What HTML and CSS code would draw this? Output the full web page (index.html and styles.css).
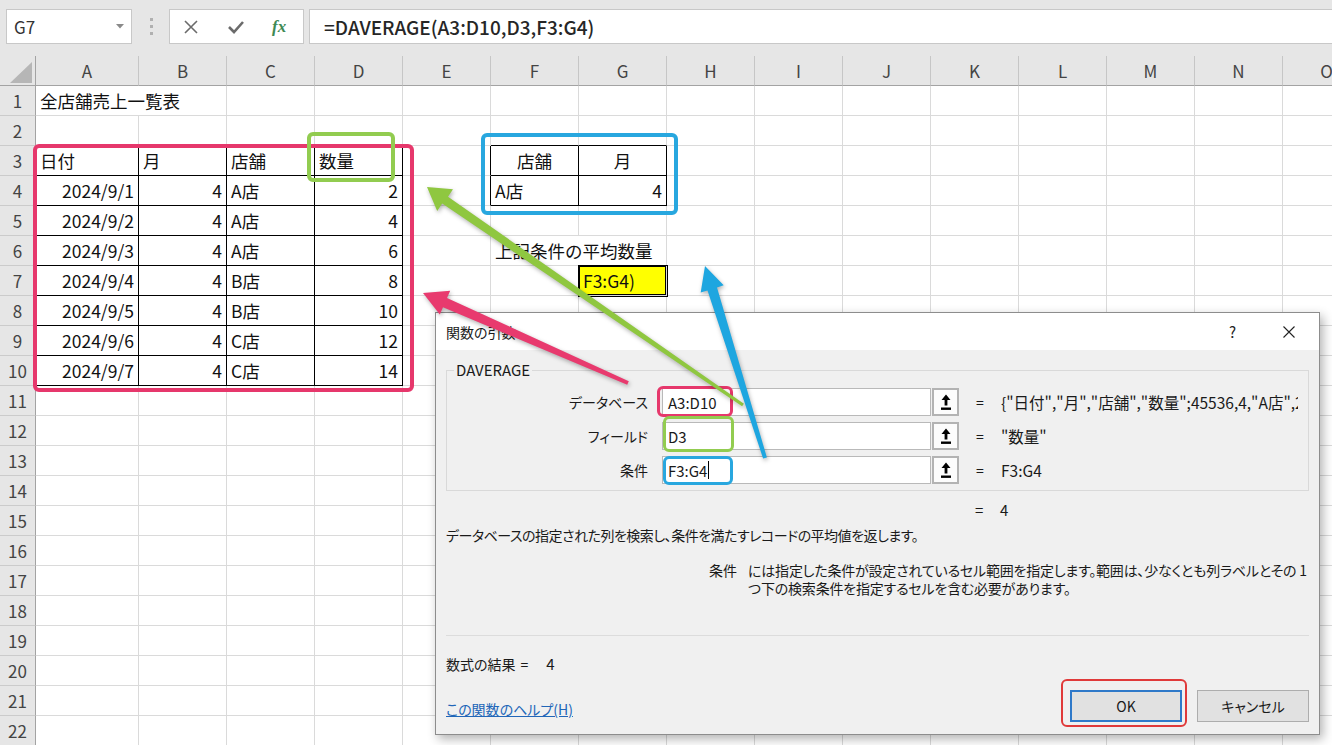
FILE: index.html
```html
<!DOCTYPE html>
<html lang="ja">
<head>
<meta charset="utf-8">
<title>DAVERAGE</title>
<link rel="stylesheet" href="styles.css">
</head>
<body>
<div class="toolbar">
  <div class="namebox"><span>G7</span><svg width="8" height="5" viewBox="0 0 8 5"><path d="M0 0h8L4 4.5z" fill="#8a8a8a"/></svg></div>
  <div class="grip"><i></i><i></i><i></i></div>
  <div class="fxbox">
    <svg class="ic-x" width="16" height="16" viewBox="0 0 16 16"><path d="M2 2l12 12M14 2L2 14" stroke="#6b6b6b" stroke-width="1.6" fill="none"/></svg>
    <svg class="ic-ok" width="18" height="16" viewBox="0 0 18 16"><path d="M2 8l5 5L16 3" stroke="#6b6b6b" stroke-width="2.6" fill="none"/></svg>
    <span class="fx">fx</span>
  </div>
  <div class="formula">=DAVERAGE(A3:D10,D3,F3:G4)</div>
</div>

<div class="sheet">
  <div class="corner"></div><div class="ch">A</div><div class="ch">B</div><div class="ch">C</div><div class="ch">D</div><div class="ch">E</div><div class="ch">F</div><div class="ch">G</div><div class="ch">H</div><div class="ch">I</div><div class="ch">J</div><div class="ch">K</div><div class="ch">L</div><div class="ch">M</div><div class="ch">N</div><div class="ch">O</div>

  <div class="rh">1</div><div class="span2">全店舗売上一覧表</div><i></i><i></i><i></i><i></i><i></i><i></i><i></i><i></i><i></i><i></i><i></i><i></i><i></i>

  <div class="rh">2</div><i class="tt"></i><i class="tt"></i><i class="tt"></i><i class="tt"></i><i></i><i class="tt"></i><i class="tt"></i><i></i><i></i><i></i><i></i><i></i><i></i><i></i><i></i>

  <div class="rh">3</div><div class="t tl">日付</div><div class="t">月</div><div class="t">店舗</div><div class="t">数量</div><i class="tr"></i><div class="t ctr">店舗</div><div class="t ctr">月</div><i></i><i></i><i></i><i></i><i></i><i></i><i></i><i></i>

  <div class="rh">4</div><div class="t tl r">2024/9/1</div><div class="t r">4</div><div class="t">A店</div><div class="t r">2</div><i class="tr"></i><div class="t">A店</div><div class="t r">4</div><i></i><i></i><i></i><i></i><i></i><i></i><i></i><i></i>

  <div class="rh">5</div><div class="t tl r">2024/9/2</div><div class="t r">4</div><div class="t">A店</div><div class="t r">4</div><i></i><i></i><i></i><i></i><i></i><i></i><i></i><i></i><i></i><i></i><i></i>

  <div class="rh">6</div><div class="t tl r">2024/9/3</div><div class="t r">4</div><div class="t">A店</div><div class="t r">6</div><i></i><div class="span2">上記条件の平均数量</div><i></i><i></i><i></i><i></i><i></i><i></i><i></i><i></i>

  <div class="rh">7</div><div class="t tl r">2024/9/4</div><div class="t r">4</div><div class="t">B店</div><div class="t r">8</div><i></i><i></i><div class="sel">F3:G4)</div><i></i><i></i><i></i><i></i><i></i><i></i><i></i><i></i>

  <div class="rh">8</div><div class="t tl r">2024/9/5</div><div class="t r">4</div><div class="t">B店</div><div class="t r">10</div><i></i><i></i><i></i><i></i><i></i><i></i><i></i><i></i><i></i><i></i><i></i>

  <div class="rh">9</div><div class="t tl r">2024/9/6</div><div class="t r">4</div><div class="t">C店</div><div class="t r">12</div><i></i><i></i><i></i><i></i><i></i><i></i><i></i><i></i><i></i><i></i><i></i>

  <div class="rh">10</div><div class="t tl r">2024/9/7</div><div class="t r">4</div><div class="t">C店</div><div class="t r">14</div><i></i><i></i><i></i><i></i><i></i><i></i><i></i><i></i><i></i><i></i><i></i>

  <div class="rh">11</div><i></i><i></i><i></i><i></i><i></i><i></i><i></i><i></i><i></i><i></i><i></i><i></i><i></i><i></i><i></i>
  <div class="rh">12</div><i></i><i></i><i></i><i></i><i></i><i></i><i></i><i></i><i></i><i></i><i></i><i></i><i></i><i></i><i></i>
  <div class="rh">13</div><i></i><i></i><i></i><i></i><i></i><i></i><i></i><i></i><i></i><i></i><i></i><i></i><i></i><i></i><i></i>
  <div class="rh">14</div><i></i><i></i><i></i><i></i><i></i><i></i><i></i><i></i><i></i><i></i><i></i><i></i><i></i><i></i><i></i>
  <div class="rh">15</div><i></i><i></i><i></i><i></i><i></i><i></i><i></i><i></i><i></i><i></i><i></i><i></i><i></i><i></i><i></i>
  <div class="rh">16</div><i></i><i></i><i></i><i></i><i></i><i></i><i></i><i></i><i></i><i></i><i></i><i></i><i></i><i></i><i></i>
  <div class="rh">17</div><i></i><i></i><i></i><i></i><i></i><i></i><i></i><i></i><i></i><i></i><i></i><i></i><i></i><i></i><i></i>
  <div class="rh">18</div><i></i><i></i><i></i><i></i><i></i><i></i><i></i><i></i><i></i><i></i><i></i><i></i><i></i><i></i><i></i>
  <div class="rh">19</div><i></i><i></i><i></i><i></i><i></i><i></i><i></i><i></i><i></i><i></i><i></i><i></i><i></i><i></i><i></i>
  <div class="rh">20</div><i></i><i></i><i></i><i></i><i></i><i></i><i></i><i></i><i></i><i></i><i></i><i></i><i></i><i></i><i></i>
  <div class="rh">21</div><i></i><i></i><i></i><i></i><i></i><i></i><i></i><i></i><i></i><i></i><i></i><i></i><i></i><i></i><i></i>
  <div class="rh">22</div><i></i><i></i><i></i><i></i><i></i><i></i><i></i><i></i><i></i><i></i><i></i><i></i><i></i><i></i><i></i>
</div>

<div class="mark m-table"></div>
<div class="mark m-field"></div>
<div class="mark m-crit"></div>

<div class="dialog">
  <div class="titlebar">
    <span class="title">関数の引数</span>
    <span class="qm">?</span>
    <svg class="close" width="12" height="12" viewBox="0 0 12 12"><path d="M0.5 0.5l11 11M11.5 0.5l-11 11" stroke="#222" stroke-width="1.1" fill="none"/></svg>
  </div>
  <div class="dbody">
    <fieldset class="group">
      <legend>DAVERAGE</legend>
      <div class="arg">
        <label>データベース</label>
        <div class="inp">A3:D10<span class="imark im-db"></span></div>
        <div class="pick"><svg width="12" height="17" viewBox="0 0 12 17"><path d="M6 0.5L1.5 6H4.6V11.5H7.4V6H10.5Z" fill="#000"/><rect x="1" y="13.5" width="10" height="2.4" fill="#000"/></svg></div>
        <span class="eq">=</span>
        <span class="val">{"日付","月","店舗","数量";45536,4,"A店",2;45537,4,"A店",4}</span>
      </div>
      <div class="arg">
        <label>フィールド</label>
        <div class="inp">D3<span class="imark im-fd"></span></div>
        <div class="pick"><svg width="12" height="17" viewBox="0 0 12 17"><path d="M6 0.5L1.5 6H4.6V11.5H7.4V6H10.5Z" fill="#000"/><rect x="1" y="13.5" width="10" height="2.4" fill="#000"/></svg></div>
        <span class="eq">=</span>
        <span class="val">"数量"</span>
      </div>
      <div class="arg">
        <label>条件</label>
        <div class="inp">F3:G4<span class="caret"></span><span class="imark im-cr"></span></div>
        <div class="pick"><svg width="12" height="17" viewBox="0 0 12 17"><path d="M6 0.5L1.5 6H4.6V11.5H7.4V6H10.5Z" fill="#000"/><rect x="1" y="13.5" width="10" height="2.4" fill="#000"/></svg></div>
        <span class="eq">=</span>
        <span class="val">F3:G4</span>
      </div>
    </fieldset>
    <div class="res1"><span class="eq">=</span><span class="num">4</span></div>
    <p class="desc">データベースの指定された列を検索し、条件を満たすレコードの平均値を返します。</p>
    <div class="argdesc">
      <span class="an">条件</span>
      <span class="at">には指定した条件が設定されているセル範囲を指定します。範囲は、少なくとも列ラベルとその 1<br>つ下の検索条件を指定するセルを含む必要があります。</span>
    </div>
    <hr class="sep">
    <div class="result">数式の結果<span class="req">=</span><span class="num2">4</span></div>
    <div class="foot">
      <a class="link" href="#">この関数のヘルプ(H)</a>
      <div class="btns">
        <div class="okwrap"><button class="btn ok">OK</button><span class="okmark"></span></div>
        <button class="btn cancel">キャンセル</button>
      </div>
    </div>
  </div>
</div>

<svg class="arrows" width="1332" height="745" viewBox="0 0 1332 745">
  <polygon class="arr" fill="#8fc740" points="427,187 453,189.3 448,196.8 743.9,403.7 742.1,406.3 442.2,203.6 437.2,210.9"/>
  <polygon class="arr" fill="#e83a6e" points="423,293 450.2,290.7 447,298 628.8,381.2 627.2,384.8 443,307.2 439.8,314.5"/>
  <polygon class="arr" fill="#1ea6e0" points="705,266 723.7,285.3 717,287.4 766.9,457.4 763.1,458.6 707.5,290.4 700.7,292.5"/>
</svg>
</body>
</html>
```

FILE: styles.css
```css
* { box-sizing: border-box; margin: 0; padding: 0; }
html, body { width: 1332px; height: 745px; overflow: hidden; }
body {
  position: relative;
  background: #fff;
  font-family: "Noto Sans CJK JP", "Noto Sans", sans-serif;
  color: #1e1e1e;
}

/* ---------- toolbar ---------- */
.toolbar {
  height: 56px;
  background: #e6e6e6;
  display: flex;
  align-items: flex-start;
  padding-top: 9px;
}
.namebox {
  margin-left: 6px;
  width: 126px;
  height: 35px;
  background: #fff;
  border: 1px solid #c8c8c8;
  display: flex;
  align-items: center;
  justify-content: space-between;
  padding: 0 7px;
  font-size: 17px;
  color: #333;
}
.grip {
  margin-left: 17px;
  width: 4px;
  height: 35px;
  display: flex;
  flex-direction: column;
  justify-content: center;
  align-items: center;
  gap: 4px;
}
.grip i { display: block; width: 3px; height: 3px; background: #b0b0b0; }
.fxbox {
  margin-left: 16px;
  width: 135px;
  height: 35px;
  background: #fff;
  border: 1px solid #c8c8c8;
  display: flex;
  align-items: center;
  padding-left: 13px;
}
.ic-ok { margin-left: 28px; }
.fx {
  margin-left: 27px;
  font-family: "Liberation Serif", serif;
  font-style: italic;
  font-weight: bold;
  font-size: 17px;
  color: #3f8a55;
}
.formula {
  margin-left: 5px;
  flex: 1;
  height: 35px;
  background: #fff;
  border: 1px solid #c8c8c8;
  border-right: 0;
  display: flex;
  align-items: center;
  padding-left: 14px;
  font-size: 19px;
  font-weight: 500;
  color: #262626;
}

/* ---------- sheet ---------- */
.sheet {
  display: grid;
  grid-template-columns: 36px 103px repeat(14, 88px);
  grid-auto-rows: 30px;
  font-size: 17.5px;
  color: #111;
}
.sheet > * {
  border-right: 1px solid #dadada;
  border-bottom: 1px solid #dadada;
  display: flex;
  align-items: center;
  padding: 0 4px;
  white-space: nowrap;
  line-height: 1;
  font-style: normal;
}
.sheet .ch {
  background: #e6e6e6;
  border-right-color: #c6c6c6;
  border-bottom-color: #a3a3a3;
  justify-content: center;
  font-size: 17px;
  color: #444;
}
.sheet .corner {
  position: relative;
  background: #e6e6e6;
  border-right-color: #a3a3a3;
  border-bottom-color: #a3a3a3;
}
.corner::after {
  content: "";
  position: absolute;
  right: 3px;
  bottom: 2px;
  width: 22px;
  height: 21px;
  background: #b6b6b6;
  clip-path: polygon(100% 0, 100% 100%, 0 100%);
}
.sheet .rh {
  background: #e6e6e6;
  border-right-color: #a3a3a3;
  border-bottom-color: #cbcbcb;
  justify-content: center;
  padding: 0;
  font-size: 17px;
  color: #444;
}
.sheet .t { border-right-color: #000; border-bottom-color: #000; }
.sheet .tl { box-shadow: inset 1px 0 #000; }
.sheet .tt { border-bottom-color: #000; }
.sheet .tr { border-right-color: #000; }
.sheet .r { justify-content: flex-end; }
.sheet .ctr { justify-content: center; }
.sheet .span2 { grid-column: span 2; }
.sheet .sel {
  position: relative;
  z-index: 1;
  background: #ffff00;
  box-shadow: 0 0 0 1px #000, inset 0 0 0 1px #000;
}

/* ---------- annotation frames ---------- */
.mark {
  position: absolute;
  border-style: solid;
  border-radius: 6px;
  pointer-events: none;
}
.m-table { left: 33px; top: 144px; width: 381px; height: 248px; border-width: 4px; border-color: #e6386c; }
.m-field { left: 307px; top: 132px; width: 88px; height: 50px; border-width: 4px; border-color: #92cc50; }
.m-crit { left: 481px; top: 133px; width: 197px; height: 82px; border-width: 4px; border-color: #28a7df; }

/* ---------- dialog ---------- */
.dialog {
  position: absolute;
  left: 435px;
  top: 312px;
  width: 885px;
  height: 423px;
  background: #f0f0f0;
  border: 1px solid #8d8d8d;
  box-shadow: 3px 4px 10px rgba(0, 0, 0, 0.3);
  font-size: 14px;
  color: #1a1a1a;
  font-feature-settings: "palt";
  display: flex;
  flex-direction: column;
}
.titlebar {
  flex-shrink: 0;
  height: 37px;
  background: #fff;
  display: flex;
  align-items: center;
  padding-left: 10px;
}
.title { flex: 1; }
.qm { font-size: 15px; color: #222; margin-right: 47px; }
.close { margin-right: 24px; }
.dbody {
  flex: 1;
  padding: 11px 10px 0 10px;
  display: flex;
  flex-direction: column;
}
.dbody > * { flex-shrink: 0; }
.group {
  border: 1px solid #d9d9d9;
  padding: 9px 0 6px 0;
  margin: 0;
  min-width: 0;
}
.group legend {
  margin-left: 7px;
  padding: 0 2px;
  font-size: 15px;
  line-height: 18px;
}
.arg { display: flex; align-items: center; height: 28px; }
.arg + .arg { margin-top: 6px; }
.arg label { width: 201px; text-align: right; margin-right: 14px; }
.inp {
  position: relative;
  width: 269px;
  height: 28px;
  background: #fff;
  border: 1px solid #b9b9b9;
  padding-left: 5px;
  display: flex;
  align-items: center;
  font-size: 15px;
}
.caret { display: inline-block; width: 1px; height: 18px; background: #000; margin-left: 1px; }
.pick {
  width: 27px;
  height: 28px;
  margin-left: 1px;
  border: 2px solid #b3b3b3;
  background: #fcfcfc;
  display: flex;
  align-items: center;
  justify-content: center;
}
.eq { margin-left: 17px; width: 25px; }
.val { flex: 1; overflow: hidden; white-space: nowrap; margin-right: 10px; font-size: 15.5px; }
.imark {
  position: absolute;
  border: 3px solid;
  border-radius: 6px;
}
.im-db { left: -6px; top: -3px; width: 76px; height: 31px; border-color: #e6386c; }
.im-fd { left: 0; top: -7px; width: 71px; height: 36px; border-color: #92cc50; }
.im-cr { left: 0; top: -1px; width: 70px; height: 29px; border-color: #28a7df; }

.res1 { margin-top: 10px; line-height: 18px; padding-left: 512px; display: flex; font-size: 15px; }
.desc { margin-top: 7px; line-height: 18px; letter-spacing: -0.5px; }
.argdesc { margin-top: 17px; display: flex; line-height: 18px; }
.an { width: 291px; text-align: right; }
.at { margin-left: 11px; white-space: nowrap; letter-spacing: -0.2px; }
.sep { margin-top: 38px; border: 0; border-top: 1px solid #dcdcdc; }
.result { margin-top: 19px; line-height: 18px; display: flex; }
.req { margin-left: 5px; }
.num2 { margin-left: 18px; font-size: 15px; }
.foot { margin-top: 17px; display: flex; justify-content: space-between; align-items: center; }
.link { color: #2166b8; text-decoration: underline; margin-top: 6px; }
.btns { display: flex; }
.okwrap { position: relative; }
.btn {
  width: 112px;
  height: 32px;
  background: #e1e1e1;
  border: 1px solid #adadad;
  font-family: inherit;
  font-size: 14px;
  color: #1a1a1a;
  font-feature-settings: "palt";
}
.ok { border-color: #2f79c9; box-shadow: inset 0 0 0 1px #2f79c9; }
.cancel { margin-left: 15px; }
.okmark {
  position: absolute;
  left: -9px;
  top: -11px;
  right: -5px;
  bottom: -5px;
  border: 2px solid #e03a3a;
  border-radius: 6px;
}

/* ---------- arrows ---------- */
.arrows {
  position: absolute;
  left: 0;
  top: 0;
  pointer-events: none;
  z-index: 10;
}
.arr { filter: drop-shadow(1px 2px 2px rgba(0, 0, 0, 0.3)); }
```
